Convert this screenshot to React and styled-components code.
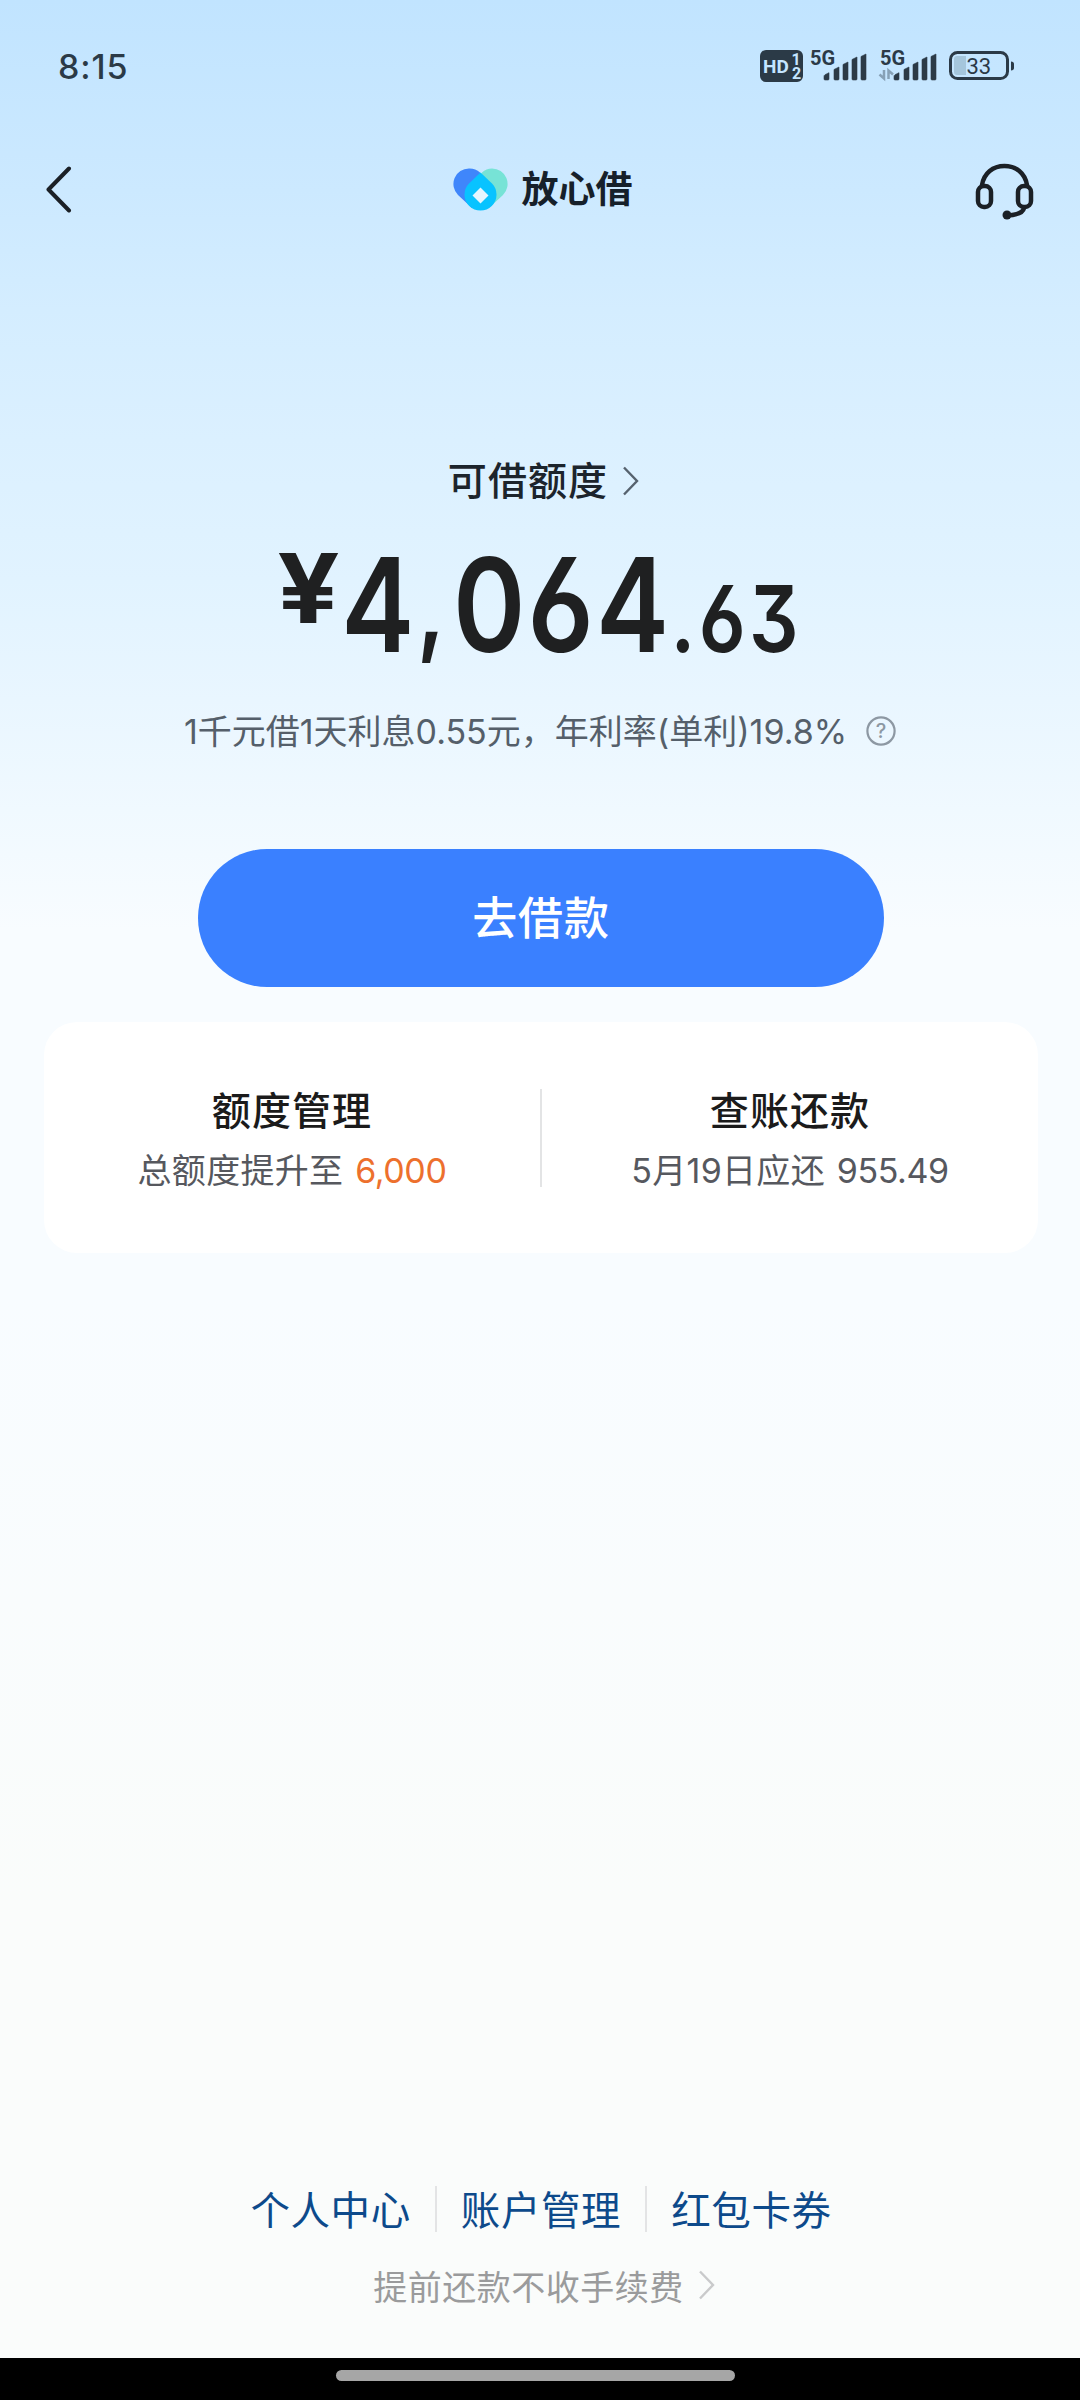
import React from 'react';
import styled, { createGlobalStyle } from 'styled-components';

const GlobalStyle = createGlobalStyle`
  * {
    box-sizing: border-box;
  }

  body {
    margin: 0;
    font-family: Inter, 'Noto Sans CJK SC', sans-serif;
  }
`;

const Screen = styled.div`
  width: 1080px;
  height: 2400px;
  display: flex;
  flex-direction: column;
  overflow: hidden;
  background: linear-gradient(
    180deg,
    #c1e4ff 0,
    #cce9ff 190px,
    #d4edff 310px,
    #dbf0ff 440px,
    #e1f3ff 580px,
    #e9f6ff 700px,
    #f0f9ff 810px,
    #f8fcff 930px,
    #f8fcff 1300px,
    #fafcfb 1900px,
    #fafcfb 2358px
  );
`;

const StatusBar = styled.div`
  height: 132px;
  padding: 0 65px 0 58px;
  display: flex;
  align-items: center;
  justify-content: space-between;
  color: #2b3a47;
`;

const Time = styled.div`
  font-size: 34px;
  font-weight: 500;
  letter-spacing: 0.9px;
`;

const StatusIcons = styled.svg`
  width: 257px;
  height: 44px;
  display: block;
`;

const Header = styled.header`
  height: 116px;
  padding: 0 46px;
  display: flex;
  align-items: center;
  justify-content: space-between;
`;

const HeaderIcon = styled.svg`
  width: 60px;
  height: 60px;
  fill: none;
  stroke: #1b2026;
`;

const Brand = styled.div`
  display: flex;
  align-items: center;
  gap: 13px;
  height: 60px;
  padding-left: 4px;
`;

const BrandLogo = styled.svg`
  width: 57px;
  height: 46px;
`;

const BrandName = styled.span`
  font-size: 37px;
  line-height: 60px;
  font-weight: 700;
  color: #16202a;
`;

const Hero = styled.section`
  display: flex;
  flex-direction: column;
  align-items: center;
  padding-top: 203px;
`;

const QuotaLabel = styled.div`
  display: flex;
  align-items: center;
  gap: 14px;
  height: 60px;
  padding-left: 7px;
  font-size: 39px;
  line-height: 56px;
  font-weight: 500;
  letter-spacing: 1.1px;
  color: #1c242c;
`;

const Chevron = styled.svg`
  width: 17px;
  height: 30px;
  fill: none;
  stroke: ${(props) => props.$color};
  stroke-width: 2.4;
`;

const Amount = styled.div`
  display: flex;
  align-items: baseline;
  height: 140px;
  margin-top: 24px;
  line-height: 140px;
  white-space: nowrap;
  font-weight: 600;
  color: #1f2021;
  font-feature-settings: 'cv03', 'cv09';
  transform: scaleX(0.845);
`;

const Yen = styled.span`
  width: 76px;
  font-size: 96px;
  font-weight: 700;
  position: relative;
  top: -29px;
  transform: scaleX(1.35);
  transform-origin: left;
`;

const Whole = styled.span`
  font-size: 130px;
  letter-spacing: 2.6px;
`;

const Comma = styled.span`
  position: relative;
  top: -9px;
  font-size: 106px;
  letter-spacing: 9px;
`;

const Cents = styled.span`
  margin-left: -1px;
  font-size: 92px;
  letter-spacing: 4px;
`;

const RateRow = styled.div`
  display: flex;
  align-items: center;
  gap: 19px;
  height: 50px;
  margin-top: 31px;
  font-size: 34px;
  line-height: 50px;
  white-space: nowrap;
  color: #555f6a;
`;

const RateText = styled.span`
  padding-top: 1px;
`;

const HelpIcon = styled.svg`
  width: 30px;
  height: 30px;
`;

const BorrowButton = styled.button`
  width: 686px;
  height: 138px;
  margin: 93px 0 0 2px;
  padding: 0 0 5px;
  border: none;
  border-radius: 69px;
  background: #3a80ff;
  color: #fff;
  font-family: inherit;
  font-size: 45px;
  font-weight: 500;
  letter-spacing: 0.8px;
  cursor: pointer;
`;

const Card = styled.section`
  width: 994px;
  height: 231px;
  margin: 35px 0 0 44px;
  display: flex;
  align-items: center;
  border-radius: 33px;
  background: #fff;
`;

const CardItem = styled.div`
  flex: 1;
  padding-top: 7px;
  display: flex;
  flex-direction: column;
  align-items: center;
  white-space: nowrap;
`;

const CardTitle = styled.div`
  height: 60px;
  font-size: 39px;
  line-height: 60px;
  font-weight: 500;
  letter-spacing: 1.1px;
  color: #1b1b1b;
`;

const CardText = styled.div`
  height: 60px;
  font-size: 34px;
  line-height: 60px;
  letter-spacing: 0.3px;
  color: #56585e;
`;

const Figure = styled.span`
  margin-left: 2px;
  letter-spacing: -0.4px;
  color: ${(props) => (props.$highlight ? '#ed702d' : 'inherit')};
`;

const Divider = styled.div`
  width: 2px;
  height: ${(props) => props.$height}px;
  background: #e3e4e5;
`;

const Footer = styled.footer`
  margin-top: auto;
  height: 181px;
  display: flex;
  flex-direction: column;
  align-items: center;
`;

const Links = styled.nav`
  display: flex;
  align-items: center;
  gap: 24px;
  height: 64px;
  padding-left: 2px;
`;

const FooterLink = styled.a`
  padding-bottom: 3px;
  font-size: 39.5px;
  letter-spacing: 0.6px;
  color: #0d4a8b;
`;

const FeeNote = styled.div`
  display: flex;
  align-items: center;
  gap: 14px;
  height: 50px;
  margin-top: 19px;
  padding-left: 8px;
  font-size: 34px;
  letter-spacing: 0.5px;
  color: #9a9b9c;
`;

const GestureBar = styled.div`
  height: 42px;
  padding-top: 12px;
  display: flex;
  justify-content: center;
  align-items: flex-start;
  background: #000;
`;

const GesturePill = styled.div`
  width: 399px;
  height: 11px;
  margin-right: 9px;
  border-radius: 6px;
  background: #a6a6a6;
`;

const SignalBars = ({ x }) => (
  <g fill="#2b3a47" stroke="#2b3a47" strokeWidth="0.6">
    <path d={`M${x} 31v-2.500q0-1.200 1-1.800l4-2v6.300q0 1-1 1h-3q-1 0-1-1z`} />
    <path d={`M${x + 10} 31v-9.500l5-2.500v12q0 1-1 1h-3q-1 0-1-1z`} />
    <path d={`M${x + 19} 31v-14.500l5-2.500v17q0 1-1 1h-3q-1 0-1-1z`} />
    <path d={`M${x + 28} 31v-19.500l5-2.500v22q0 1-1 1h-3q-1 0-1-1z`} />
    <path d={`M${x + 37} 31v-22.500l5-2.500v25q0 1-1 1h-3q-1 0-1-1z`} />
  </g>
);

const StatusGlyphs = () => (
  <StatusIcons viewBox="0 -4 257 44" fontFamily="Roboto, sans-serif" fontWeight="700">
    <rect x="2" y="2" width="43" height="32" rx="6" fill="#2b3a47" />
    <text x="5" y="25" fontSize="19" fill="#c4e5ff">HD</text>
    <text x="33.500" y="17" fontSize="16" fill="#c4e5ff">1</text>
    <text x="34" y="31" fontSize="16" fill="#c4e5ff">2</text>
    <text x="52" y="17" fontSize="20" fill="#2b3a47">5G</text>
    <SignalBars x={66} />
    <text x="122" y="17" fontSize="20" fill="#2b3a47">5G</text>
    <path d="M126 22v8.500l-4.500-4M130.500 31v-8.500l4.500 4" fill="none" stroke="#87a1b6" strokeWidth="2.500" />
    <SignalBars x={136} />
    <path d="M208 8h-9q-3 0-3 3v13q0 3 3 3h9z" fill="#a5c6dc" />
    <rect x="192.500" y="4.500" width="57" height="26" rx="7" fill="none" stroke="#2b3a47" strokeWidth="3" />
    <path d="M253 13.500c2 0 3 1 3 2.500v4c0 1.500-1 2.500-3 2.500z" fill="#2b3a47" />
    <text x="208.500" y="25.500" fontSize="22" fontWeight="400" fill="#2b3a47">33</text>
  </StatusIcons>
);

const ChevronRight = ({ color }) => (
  <Chevron viewBox="0 0 17 30" $color={color}>
    <path d="M2 1.500 15 15 2 28.500" />
  </Chevron>
);

const App = () => {
  return (
    <>
      <GlobalStyle />
      <Screen>
        <StatusBar>
          <Time>8:15</Time>
          <StatusGlyphs />
        </StatusBar>

        <Header>
          <HeaderIcon viewBox="0 0 60 60" strokeWidth="4" strokeLinecap="round" strokeLinejoin="round">
            <path d="M23 8.500 2.500 29.500 23 50.500" />
          </HeaderIcon>
          <Brand>
            <BrandLogo viewBox="0 0 57 46">
              <path d="M40 1.500a15.500 15.500 0 0 1 11 26.500L38 40 20 20 30 5.500A15.500 15.500 0 0 1 40 1.500z" fill="#77e3d6" />
              <path d="M17 1.500A15.500 15.500 0 0 0 6 28l14 13L37 19 28 5.500A15.500 15.500 0 0 0 17 1.500z" fill="#3f86fb" />
              <path d="M28.500 5.500 40 16.500a16 16 0 1 1-23 0z" fill="#08c3ff" />
              <path d="M28.500 20.500 36.500 28.500 28.500 36.500 20.500 28.500z" fill="#e4f6ff" />
            </BrandLogo>
            <BrandName>放心借</BrandName>
          </Brand>
          <HeaderIcon viewBox="0 -2 60 60" strokeWidth="4.500" strokeLinecap="round">
            <path d="M8 23C10 11 19 4 30.500 4S51 11 53 23" />
            <rect x="4" y="24" width="13" height="21" rx="6" />
            <rect x="44" y="24" width="13" height="21" rx="6" />
            <path d="M50 46c-1 5-7 7-17 7.500" />
            <circle cx="33" cy="53" r="4.500" fill="#1b2026" stroke="none" />
          </HeaderIcon>
        </Header>

        <Hero>
          <QuotaLabel>
            可借额度
            <ChevronRight color="#56626e" />
          </QuotaLabel>
          <Amount>
            <Yen>¥</Yen>
            <Whole>
              4<Comma>,</Comma>064
            </Whole>
            <Cents>.63</Cents>
          </Amount>
          <RateRow>
            <RateText>{'1千元借1天利息0.55元\uff0c年利率(单利)19.8%'}</RateText>
            <HelpIcon viewBox="0 0 30 30">
              <circle cx="15" cy="15" r="13.600" fill="none" stroke="#8d98a3" strokeWidth="2.200" />
              <text x="15" y="22" fontSize="20" fontWeight="500" textAnchor="middle" fill="#8d98a3">?</text>
            </HelpIcon>
          </RateRow>
          <BorrowButton type="button">去借款</BorrowButton>
        </Hero>

        <Card>
          <CardItem>
            <CardTitle>额度管理</CardTitle>
            <CardText>
              总额度提升至 <Figure $highlight>6,000</Figure>
            </CardText>
          </CardItem>
          <Divider $height={98} />
          <CardItem>
            <CardTitle>查账还款</CardTitle>
            <CardText>
              5月19日应还 <Figure>955.49</Figure>
            </CardText>
          </CardItem>
        </Card>

        <Footer>
          <Links>
            <FooterLink>个人中心</FooterLink>
            <Divider $height={46} />
            <FooterLink>账户管理</FooterLink>
            <Divider $height={46} />
            <FooterLink>红包卡券</FooterLink>
          </Links>
          <FeeNote>
            提前还款不收手续费
            <ChevronRight color="#c9cacb" />
          </FeeNote>
        </Footer>
        <GestureBar>
          <GesturePill />
        </GestureBar>
      </Screen>
    </>
  );
};

export default App;
